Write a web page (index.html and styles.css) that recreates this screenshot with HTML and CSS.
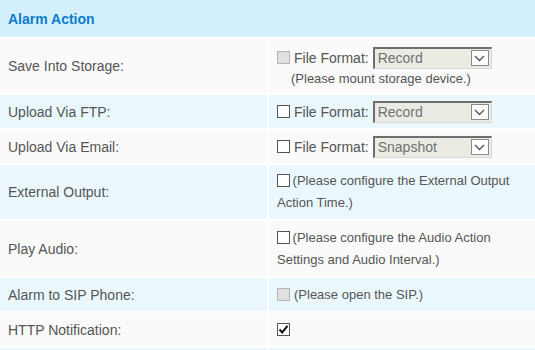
FILE: index.html
```html
<!DOCTYPE html>
<html lang="en">
<head>
    <meta charset="UTF-8">
    <title>Alarm Action</title>
    <link rel="stylesheet" href="styles.css">
</head>
<body>
    <table class="action-table">
        <tr class="head">
            <td colspan="2">Alarm Action</td>
        </tr>
        <tr class="odd tall-a">
            <td class="label">Save Into Storage:</td>
            <td class="value">
                <div class="line">
                    <span class="box disabled"></span>
                    <span class="fmt">File Format:</span>
                    <div class="fake-select"><span class="sel-text">Record</span><span class="sel-btn"><svg width="11" height="7" viewBox="0 0 11 7"><path d="M1 1 L5.5 5.5 L10 1" fill="none" stroke="#555" stroke-width="1.4"/></svg></span></div>
                </div>
                <div class="note">(Please mount storage device.)</div>
            </td>
        </tr>
        <tr class="even single">
            <td class="label">Upload Via FTP:</td>
            <td class="value">
                <div class="line">
                    <span class="box"></span>
                    <span class="fmt">File Format:</span>
                    <div class="fake-select"><span class="sel-text">Record</span><span class="sel-btn"><svg width="11" height="7" viewBox="0 0 11 7"><path d="M1 1 L5.5 5.5 L10 1" fill="none" stroke="#555" stroke-width="1.4"/></svg></span></div>
                </div>
            </td>
        </tr>
        <tr class="odd single">
            <td class="label">Upload Via Email:</td>
            <td class="value">
                <div class="line">
                    <span class="box"></span>
                    <span class="fmt">File Format:</span>
                    <div class="fake-select"><span class="sel-text">Snapshot</span><span class="sel-btn"><svg width="11" height="7" viewBox="0 0 11 7"><path d="M1 1 L5.5 5.5 L10 1" fill="none" stroke="#555" stroke-width="1.4"/></svg></span></div>
                </div>
            </td>
        </tr>
        <tr class="even tall-b">
            <td class="label">External Output:</td>
            <td class="value wrap">
                <span class="box"></span> (Please configure the External Output Action Time.)
            </td>
        </tr>
        <tr class="odd tall-c">
            <td class="label">Play Audio:</td>
            <td class="value wrap">
                <span class="box"></span> (Please configure the Audio Action Settings and Audio Interval.)
            </td>
        </tr>
        <tr class="even single">
            <td class="label">Alarm to SIP Phone:</td>
            <td class="value">
                <div class="line">
                    <span class="box disabled"></span>
                    <span>(Please open the SIP.)</span>
                </div>
            </td>
        </tr>
        <tr class="odd single">
            <td class="label">HTTP Notification:</td>
            <td class="value">
                <div class="line">
                    <span class="box"><svg width="11" height="11" viewBox="0 0 11 11"><path d="M1.5 5.5 L4.2 8.4 L9.5 1.8" fill="none" stroke="#111" stroke-width="2"/></svg></span>
                </div>
            </td>
        </tr>
        <tr class="even single">
            <td class="label"></td>
            <td class="value"></td>
        </tr>
    </table>
</body>
</html>
```

FILE: styles.css
```css
body {
    margin: 0;
    background: #ffffff;
    font-family: "Liberation Sans", Arial, sans-serif;
    font-size: 13px;
    color: #555;
    overflow: hidden;
}
.action-table {
    border-collapse: separate;
    border-spacing: 2px;
    margin: -2px;
    width: 539px;
}
.action-table td {
    padding: 0;
    vertical-align: middle;
}
.head td {
    height: 37px;
    background-color: #d4f0fd;
    color: #0b7ccb;
    font-size: 14px;
    font-weight: bold;
    padding-left: 8px;
}
.odd td {
    background-color: #fafafa;
}
.even td {
    background-color: #eaf8fe;
}
.single td {
    height: 33px;
}
.tall-a td {
    height: 54px;
}
.tall-b td {
    height: 54px;
}
.tall-c td {
    height: 55px;
}
.label {
    width: 259px;
    font-size: 14px;
    padding-left: 8px !important;
}
.value {
    padding-left: 8px !important;
}
.line {
    display: flex;
    align-items: center;
    gap: 5px;
}
.fmt {
    font-size: 14px;
}
.note {
    padding-left: 14px;
    margin-top: 2px;
}
.wrap {
    line-height: 22px;
    padding-right: 20px !important;
}
.box {
    display: inline-flex;
    align-items: center;
    justify-content: center;
    width: 11px;
    height: 11px;
    border: 1px solid #555;
    background: #fff;
    vertical-align: -2px;
    margin-right: -1px;
}
.box.disabled {
    border-color: #b5b5b5;
    background: #e0e0e0;
}
.fake-select {
    display: flex;
    align-items: center;
    width: 116px;
    height: 19px;
    margin-left: -1px;
    background: #ebebe4;
    border-top: 2px solid #6e6e6e;
    border-left: 2px solid #6e6e6e;
    border-right: 1px solid #d8d8d8;
    border-bottom: 1px solid #d8d8d8;
}
.sel-text {
    flex: 1;
    padding-left: 3px;
    color: #707070;
    font-size: 14px;
}
.sel-btn {
    display: flex;
    align-items: center;
    justify-content: center;
    width: 16px;
    height: 14px;
    margin-right: 2px;
    background: #fdfdfd;
    border: 1px solid #8a8a8a;
}
```
